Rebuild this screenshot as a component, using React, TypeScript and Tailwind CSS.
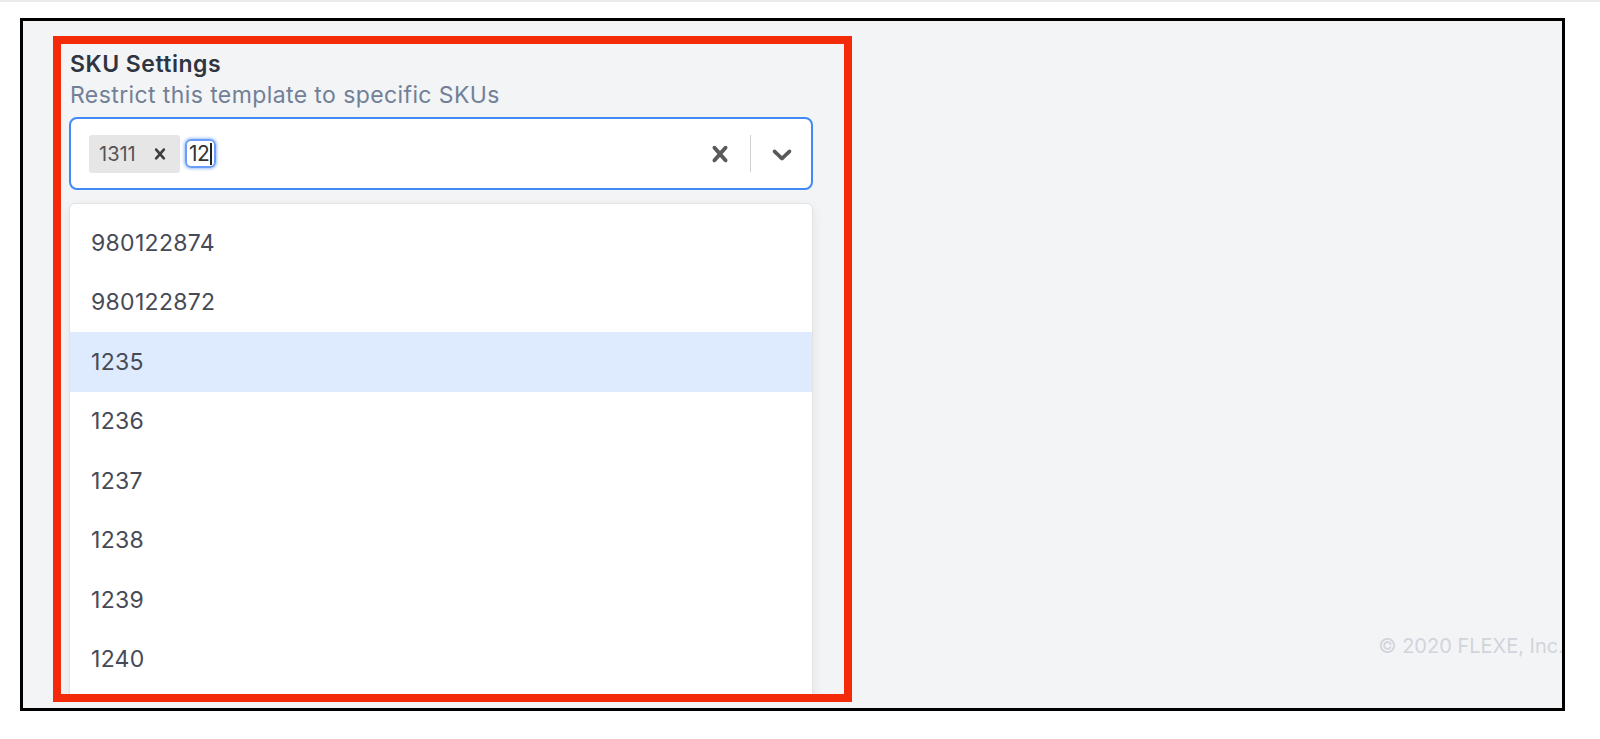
const skus = ['980122874', '980122872', '1235', '1236', '1237', '1238', '1239', '1240']

function CrossIcon({ className }: { className?: string }) {
  return (
    <svg viewBox="0 0 20 20" className={className} fill="currentColor" aria-hidden="true">
      <path d="M14.348 14.849c-0.469 0.469-1.229 0.469-1.697 0l-2.651-3.030-2.651 3.029c-0.469 0.469-1.229 0.469-1.697 0-0.469-0.469-0.469-1.229 0-1.697l2.758-3.150-2.759-3.152c-0.469-0.469-0.469-1.228 0-1.697s1.228-0.469 1.697 0l2.652 3.031 2.651-3.031c0.469-0.469 1.228-0.469 1.697 0s0.469 1.229 0 1.697l-2.758 3.152 2.758 3.150c0.469 0.469 0.469 1.229 0 1.698z" />
    </svg>
  )
}

function ChevronIcon({ className }: { className?: string }) {
  return (
    <svg viewBox="0 0 20 20" className={className} fill="currentColor" aria-hidden="true">
      <path d="M4.516 7.548c0.436-0.446 1.043-0.481 1.576 0l3.908 3.747 3.908-3.747c0.533-0.481 1.141-0.446 1.574 0 0.436 0.445 0.408 1.197 0 1.615-0.406 0.418-4.695 4.502-4.695 4.502-0.217 0.223-0.502 0.335-0.787 0.335s-0.57-0.112-0.789-0.335c0 0-4.287-4.084-4.695-4.502s-0.436-1.17 0-1.615z" />
    </svg>
  )
}

function SkuSelect() {
  return (
    <div>
      <div className="flex h-[73px] w-[744px] items-center rounded-[8px] border-2 border-[#4189f6] bg-white pl-[18px] pr-[13px]">
        <div className="flex flex-1 items-center gap-[5px]">
          <div className="flex h-[38px] w-[91px] items-center rounded-[3px] bg-[#e6e6e6] pl-[10px] text-[20px] text-[#555]">
            <span>1311</span>
            <CrossIcon className="ml-[13px] h-[22px] w-[22px] text-[#3d3d3d]" />
          </div>
          <div className="flex h-[29px] w-[31px] items-center rounded-[6px] border-2 border-[#6b9cf7] pl-[2px] text-[21px] tracking-[-0.5px] text-[#333] shadow-[0_0_3px_1px_rgba(61,134,245,0.5)]">
            <span>12</span>
            <span className="ml-[1px] h-[22px] w-[1.5px] bg-[#222]" />
          </div>
        </div>
        <CrossIcon className="h-[32px] w-[32px] text-[#5a5a5a]" />
        <div className="ml-[14px] mr-[15px] h-[37px] w-px bg-[#d0d0d0]" />
        <ChevronIcon className="h-[32px] w-[32px] text-[#5a5a5a]" />
      </div>
      <div className="mt-[13px] h-[540px] w-[744px] rounded-[6px] border border-[#e3e3e3] bg-white pt-[9px] shadow-[0_4px_11px_rgba(0,0,0,0.08)]">
        {skus.map((s) => (
          <div
            key={s}
            className={`flex h-[59.5px] items-center pl-[21px] text-[23px] tracking-[0.3px] text-[#464a56] ${s === '1235' ? 'bg-[#deebfe]' : ''}`}
          >
            {s}
          </div>
        ))}
      </div>
    </div>
  )
}

export default function App() {
  return (
    <div className="h-[739px] w-[1600px] overflow-hidden bg-white font-['Inter',sans-serif]">
      <div className="h-[2px] bg-[#ebebeb]" />
      <div className="pl-[20px] pt-[16px]">
        <div className="relative h-[693px] w-[1545px] overflow-hidden border-[3px] border-black bg-[#f3f4f6] pl-[30px] pt-[15px]">
          <div className="h-[666px] w-[799px] overflow-hidden border-[8px] border-[#f42b0b] pl-[8px] pt-[6px]">
            <div className="pl-[1px] text-[23px] font-semibold leading-[29px] tracking-[0.5px] text-[#2f3441]">SKU Settings</div>
            <div className="mt-[2px] pl-[1px] text-[23px] leading-[29px] tracking-[0.4px] text-[#718096]">Restrict this template to specific SKUs</div>
            <div className="mt-[7px]">
              <SkuSelect />
            </div>
          </div>
          <div className="absolute right-[-2px] top-[611px] text-[20px] leading-[28px] text-[#d1d5db]">© 2020 FLEXE, Inc.</div>
        </div>
      </div>
    </div>
  )
}
